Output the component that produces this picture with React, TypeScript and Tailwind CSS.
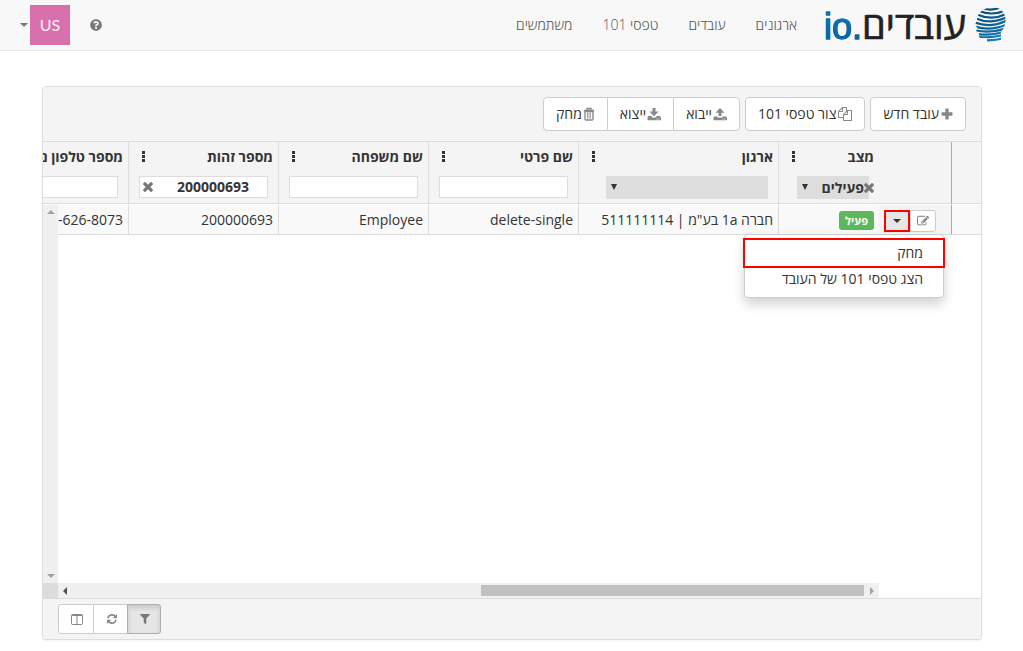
import type { ReactNode } from 'react';
import { FaFilter, FaQuestionCircle } from 'react-icons/fa';

const navLinks = ['ארגונים', 'עובדים', 'טפסי 101', 'משתמשים'];

const FILES = 'M1696 384q40 0 68 28t28 68v1216q0 40-28 68t-68 28h-960q-40 0-68-28t-28-68v-288h-544q-40 0-68-28t-28-68v-672q0-40 20-88t48-76l408-408q28-28 76-48t88-20h416q40 0 68 28t28 68v328q68-40 128-40h416zm-544 213l-299 299h299v-299zm-640-384l-299 299h299v-299zm196 647l316-316v-416h-384v416q0 40-28 68t-68 28h-416v640h512v-256q0-40 20-88t48-76zm956 804v-1152h-384v416q0 40-28 68t-68 28h-416v640h896z';
const EDIT = 'M888 1184l116-116-152-152-116 116v56h96v96h56zm440-720q-16-16-33 1l-350 350q-17 17-1 33t33-1l350-350q17-17 1-33zm80 594v190q0 119-84.5 203.5t-203.5 84.5h-832q-119 0-203.5-84.5t-84.5-203.5v-832q0-119 84.5-203.5t203.5-84.5h832q63 0 117 25 15 7 18 23 3 17-9 29l-49 49q-14 14-32 8-23-6-45-6h-832q-66 0-113 47t-47 113v832q0 66 47 113t113 47h832q66 0 113-47t47-113v-126q0-13 9-22l64-64q15-15 35-7t20 29zm-96-738l288 288-672 672h-288v-288zm444 132l-92 92-288-288 92-92q28-28 68-28t68 28l152 152q28 28 28 68t-28 68z';
const REFRESH = 'M1511 928q0 5-1 7-64 268-268 434.5t-478 166.5q-146 0-282.5-55t-243.5-157l-129 129q-19 19-45 19t-45-19-19-45v-448q0-26 19-45t45-19h448q26 0 45 19t19 45-19 45l-137 137q71 66 161 102t187 36q134 0 250-65t186-179q11-17 53-117 8-23 30-23h192q13 0 22.5 9.5t9.5 22.5zm25-800v448q0 26-19 45t-45 19h-448q-26 0-45-19t-19-45 19-45l138-138q-148-137-349-137-134 0-250 65t-186 179q-11 17-53 117-8 23-30 23h-199q-13 0-22.5-9.5t-9.5-22.5v-7q65-268 270-434.5t480-166.5q146 0 284 55.5t245 156.5l130-129q19-19 45-19t45 19 19 45z';
const TIMES = 'M1490 1322q0 40-28 68l-136 136q-28 28-68 28t-68-28l-294-294-294 294q-28 28-68 28t-68-28l-136-136q-28-28-28-68t28-68l294-294-294-294q-28-28-28-68t28-68l136-136q28-28 68-28t68 28l294 294 294-294q28-28 68-28t68 28l136 136q28 28 28 68t-28 68l-294 294 294 294q28 28 28 68z';

function TimesIcon() {
  return (
    <svg viewBox="302 366 1188 1188" className="size-[10px] fill-[#777]">
      <path d={TIMES} />
    </svg>
  );
}

function PlusIcon() {
  return (
    <svg viewBox="0 0 12 12" className="size-3 fill-[#888]">
      <path d="M5 .5h2q.7 0 .7.7v3.1h3.1q.7 0 .7.7v2q0 .7-.7.7H7.700v3.100q0 .7-.7.7H5q-.7 0-.7-.7V7.700H1.200q-.7 0-.7-.7V5q0-.7.7-.7h3.100V1.200q0-.7.7-.7z" />
    </svg>
  );
}

function UploadIcon() {
  return (
    <svg viewBox="0 0 14 14" className="size-[14px] fill-[#888]">
      <path d="M7 1l4.500 4.700H8.500V9h-3V5.700h-3z" />
      <path d="M1 9.500h3.500v1h5v-1H13l1 1.500v2.200H.5V11zM9.500 11.500v.9h.9v-.9zm1.900 0v.9h.9v-.9z" fillRule="evenodd" />
    </svg>
  );
}

function DownloadIcon() {
  return (
    <svg viewBox="0 0 14 14" className="size-[14px] fill-[#888]">
      <path d="M5.500 1h3v3.500h3L7 9.200 2.500 4.500h3z" />
      <path d="M1 9h3l2 1.800h2L10 9h3l1 2v2.200H.5V11zM9.500 11.500v.9h.9v-.9zm1.900 0v.9h.9v-.9z" fillRule="evenodd" />
    </svg>
  );
}

function TrashIcon() {
  return (
    <svg viewBox="0 0 12 14" className="h-[14px] w-3 fill-none stroke-[#888]">
      <path d="M1 3.500h10M4 3V1.500h4V3" strokeWidth="1.300" />
      <path d="M2 4.500h8V12q0 1-1 1H3q-1 0-1-1z" strokeWidth="1.400" />
      <path d="M4.500 5.500v6M6 5.500v6M7.500 5.500v6" strokeWidth=".8" />
    </svg>
  );
}

function Logo() {
  return (
    <a href="#" aria-label="עובדים.io" className="flex h-[50px] items-center gap-[9px]">
      <svg viewBox="0 0 32 36" className="h-9 w-8">
        <defs>
          <linearGradient id="head" gradientUnits="userSpaceOnUse" x1="4" y1="0" x2="22" y2="36">
            <stop offset="0" stopColor="#0b4a70" />
            <stop offset=".5" stopColor="#0a5f94" />
            <stop offset="1" stopColor="#1583c8" />
          </linearGradient>
          <clipPath id="face">
            <path d="M8 3C12 0 20-1 25 2c4 3 6 7 5.500 13-.5 4-2 7-4.500 10v10H12v-4c-3 .5-8 .5-8-1.500v-3L1 24l1.500-3L0 18l2-5c0-5 3-8 6-10z" />
          </clipPath>
        </defs>
        <g clipPath="url(#face)" fill="none" stroke="url(#head)" strokeWidth="2.200">
          <path d="M8 1.500q9 2.500 18-1" />
          <path d="M4 4q13 5 25 0" />
          <path d="M2 7.500q15 6.500 29-.5" />
          <path d="M1 11.500q15 6.500 31-1.500" />
          <path d="M0 15.500q15 6 32-2" />
          <path d="M0 19.500q15 5 32-2" />
          <path d="M0 23.200q15 3.500 32-2" />
          <path d="M2 26.800q13 2.500 28-2.300" />
          <path d="M4 30q11 1.500 24-2" />
          <path d="M10 33.200q9 .5 18-1.700" />
        </g>
      </svg>
      <span className="flex items-baseline text-[38px] leading-[50px] text-[#222] [-webkit-text-stroke:0.7px_#222]">
        עובדים
        <span dir="ltr" className="bg-gradient-to-b from-[#1583c8] to-[#0b5585] bg-clip-text font-['Liberation_Sans',sans-serif] text-[36px] text-transparent [-webkit-text-stroke:1px_#0f6aa6]">io.</span>
      </span>
    </a>
  );
}

function ToolbarButton({ icon, children, className = 'gap-[2px] rounded' }: { icon: ReactNode; children: ReactNode; className?: string }) {
  return (
    <button type="button" className={`flex h-[34px] items-center border border-[#ccc] bg-white px-3 ${className}`}>
      {icon}
      {children}
    </button>
  );
}

function ColumnHead({ title, menu = true, children }: { title: string; menu?: boolean; children: ReactNode }) {
  return (
    <th scope="col" className="h-[62px] border-b border-l border-[#ddd] p-0 align-top">
      <div className="flex h-[34px] items-center justify-between pr-[5px] pb-[5px] pl-[13px] whitespace-nowrap">
        {title}
        {menu && (
          <button type="button" aria-label={`תפריט ${title}`} className="flex flex-col gap-px">
            <span className="size-[3px] bg-[#333]" />
            <span className="size-[3px] bg-[#333]" />
            <span className="size-[3px] bg-[#333]" />
          </button>
        )}
      </div>
      {children}
    </th>
  );
}

function FilterInput({ label, value = '' }: { label: string; value?: string }) {
  return (
    <div className="relative mx-[10px]">
      <input type="text" aria-label={label} defaultValue={value} className="block h-[22px] w-full border border-[#ddd] bg-white pr-[18px] pb-[2px] pl-5 font-bold" />
      {value && (
        <button type="button" aria-label="נקה" className="absolute top-[6px] left-1">
          <TimesIcon />
        </button>
      )}
    </div>
  );
}

function Cell({ children }: { children: ReactNode }) {
  return <td className="border-t border-b border-l border-t-white border-b-[#ddd] border-l-[#ddd] px-[5px] py-0 whitespace-nowrap">{children}</td>;
}

export default function App() {
  return (
    <div dir="rtl" className="flex min-h-screen flex-col bg-white font-['Open_Sans','Noto_Sans',sans-serif] text-[14px] leading-5 text-[#333]">
      <header className="flex h-[51px] items-center border-b border-[#e7e7e7] bg-[#f8f8f8] pr-4 pl-5">
        <Logo />
        <nav className="mr-3 flex flex-1 font-light">
          {navLinks.map((link) => (
            <a key={link} href="#" className="px-[15px] py-[15px] text-[#555]">{link}</a>
          ))}
        </nav>
        <button type="button" aria-label="עזרה" className="ml-5 text-[#777]">
          <FaQuestionCircle className="size-3" />
        </button>
        <button type="button" className="flex items-center gap-[2px]">
          <span className="flex size-10 items-center justify-center bg-[#d870ad] font-['Lato',sans-serif] text-[16px] text-white/90">US</span>
          <span className="border-x-4 border-t-4 border-x-transparent border-t-[#777]" />
        </button>
      </header>

      <main className="mt-[35px] mr-[41px] mb-[11px] ml-[42px] flex flex-1 flex-col overflow-hidden rounded border border-[#ddd] bg-white shadow-xs">
        {/* Toolbar */}
        <div className="flex gap-[5px] border-b border-[#ddd] bg-[#f4f4f4] px-[15px] py-[10px]">
          <ToolbarButton icon={<PlusIcon />}>עובד חדש</ToolbarButton>
          <ToolbarButton
            icon={
              <svg viewBox="0 0 1792 1792" className="size-[14px] fill-[#888]">
                <path d={FILES} />
              </svg>
            }
          >
            צור טפסי 101
          </ToolbarButton>
          <div className="flex">
            <ToolbarButton icon={<UploadIcon />} className="gap-px rounded-r">ייבוא</ToolbarButton>
            <ToolbarButton icon={<DownloadIcon />} className="gap-px border-x-0">ייצוא</ToolbarButton>
            <ToolbarButton icon={<TrashIcon />} className="gap-px rounded-l">מחק</ToolbarButton>
          </div>
        </div>

        {/* Grid */}
        <div className="relative flex-1 overflow-hidden">
          <table className="w-[1003px] table-fixed border-separate border-spacing-0 text-right">
            <colgroup>
              <col className="w-[30px]" />
              <col className="w-[72px]" />
              <col className="w-[101px]" />
              <col className="w-[200px]" />
              <col className="w-[150px]" />
              <col className="w-[150px]" />
              <col className="w-[150px]" />
              <col className="w-[150px]" />
            </colgroup>
            <thead className="bg-[#f4f4f4]">
              <tr>
                <th aria-label="בחירה" className="border-b border-l border-b-[#ddd] border-l-[#aaa] p-0" />
                <th aria-label="פעולות" className="border-b border-[#ddd] p-0" />
                <ColumnHead title="מצב">
                  <div className="relative mr-[10px] ml-[18px]">
                    <select aria-label="סינון מצב" className="block h-[23px] w-full appearance-none bg-[#ddd] pr-[5px] font-bold">
                      <option>פעילים</option>
                    </select>
                    <span className="pointer-events-none absolute top-[8px] left-[5px] border-x-[3px] border-t-[6px] border-x-transparent border-t-[#333]" />
                    <button type="button" aria-label="נקה" className="absolute top-[7px] right-[-5px]">
                      <TimesIcon />
                    </button>
                  </div>
                </ColumnHead>
                <ColumnHead title="ארגון">
                  <div className="relative mr-[10px] ml-[27px]">
                    <select aria-label="סינון ארגון" className="block h-[23px] w-full appearance-none bg-[#ddd]">
                      <option></option>
                    </select>
                    <span className="pointer-events-none absolute top-[8px] left-[5px] border-x-[3px] border-t-[6px] border-x-transparent border-t-[#333]" />
                  </div>
                </ColumnHead>
                <ColumnHead title="שם פרטי"><FilterInput label="סינון שם פרטי" /></ColumnHead>
                <ColumnHead title="שם משפחה"><FilterInput label="סינון שם משפחה" /></ColumnHead>
                <ColumnHead title="מספר זהות"><FilterInput label="סינון מספר זהות" value="200000693" /></ColumnHead>
                <ColumnHead title="מספר טלפון נייד" menu={false}><FilterInput label="סינון מספר טלפון נייד" /></ColumnHead>
              </tr>
            </thead>
            <tbody className="bg-[#f9f9f9]">
              <tr className="h-[31px]">
                <td className="border-t border-b border-l border-t-white border-b-[#ddd] border-l-[#aaa] p-0" />
                <td className="border-t border-b border-t-white border-b-[#ddd] bg-[#f4f4f4] p-0 pt-[2px] pr-[15px]">
                  <div className="relative flex h-[22px]">
                    <button type="button" aria-label="עריכה" className="flex w-[26px] items-center justify-center rounded-r-[3px] border border-[#ccc] bg-white">
                      <svg viewBox="0 0 1792 1792" className="size-3 fill-[#777]">
                        <path d={EDIT} />
                      </svg>
                    </button>
                    <button type="button" aria-label="פעולות נוספות" aria-expanded="true" className="flex w-[26px] items-center justify-center border-2 border-[#f00] bg-[#e6e6e6]">
                      <span className="border-x-4 border-t-4 border-x-transparent border-t-[#333]" />
                    </button>
                    <ul role="menu" className="absolute top-[24px] right-[-8px] z-10 w-[200px] rounded border border-[#ccc] bg-white py-[3px] shadow-[0_6px_12px_rgba(0,0,0,0.18)]">
                      <li role="none" className="-mx-[2px]">
                        <button type="button" role="menuitem" className="block h-[30px] w-full border-2 border-[#f00] px-5 text-right">מחק</button>
                      </li>
                      <li role="none">
                        <button type="button" role="menuitem" className="block h-[26px] w-full px-5 pb-1 text-right">הצג טפסי 101 של העובד</button>
                      </li>
                    </ul>
                  </div>
                </td>
                <Cell>
                  <span className="mt-[2px] block w-fit rounded-[3px] bg-[#5cb85c] px-[6px] text-[11px] leading-[19px] font-bold text-white">פעיל</span>
                </Cell>
                <Cell>חברה 1a בע"מ | 511111114</Cell>
                <Cell>delete-single</Cell>
                <Cell>Employee</Cell>
                <Cell>200000693</Cell>
                <Cell><bdi dir="ltr">-626-8073</bdi></Cell>
              </tr>
            </tbody>
          </table>

          {/* Scrollbars sit over the grid */}
          <div className="absolute top-[63px] bottom-[15px] left-0 flex w-[15px] flex-col items-center justify-between bg-[#f0f0f0] py-[5px]">
            <span className="border-x-4 border-b-4 border-x-transparent border-b-[#a3a3a3]" />
            <span className="border-x-4 border-t-4 border-x-transparent border-t-[#a3a3a3]" />
          </div>
          <div className="absolute right-[102px] bottom-0 left-0 flex h-[15px] items-center bg-[#f0f0f0]" dir="ltr">
            <span className="h-full w-[15px] bg-[#dcdcdc]" />
            <span className="ml-[5px] border-y-4 border-r-4 border-y-transparent border-r-[#505050]" />
            <span className="flex-1" />
            <span className="h-[11px] w-[383px] bg-[#c1c1c1]" />
            <span className="mr-[5px] ml-[6px] border-y-4 border-l-4 border-y-transparent border-l-[#a3a3a3]" />
          </div>
        </div>

        {/* Footer */}
        <div dir="ltr" className="flex border-t border-[#ddd] bg-[#f4f4f4] px-[15px] py-[5px] text-[#777]">
          <button type="button" aria-label="עמודות" className="flex h-[30px] w-9 items-center justify-center rounded-l-[3px] border border-[#ccc] bg-white pl-[2px]">
            <svg viewBox="0 0 12 11" className="h-[11px] w-3 fill-none stroke-[#888]">
              <rect x=".5" y=".5" width="11" height="10" rx="1" />
              <path d="M1 1.500h10M6 1v9" />
            </svg>
          </button>
          <button type="button" aria-label="רענון" className="flex h-[30px] w-[33px] items-center justify-center border-y border-[#ccc] bg-white pl-[2px]">
            <svg viewBox="0 0 1536 1536" className="size-[10px] fill-[#888]">
              <path d={REFRESH} />
            </svg>
          </button>
          <button type="button" aria-label="סינון" aria-pressed="true" className="flex h-[30px] w-[34px] items-center justify-center rounded-r-[3px] border border-[#adadad] bg-[#e6e6e6] pl-[2px] shadow-[inset_0_3px_5px_rgba(0,0,0,0.125)]">
            <FaFilter className="size-[10px]" />
          </button>
        </div>
      </main>
    </div>
  );
}
